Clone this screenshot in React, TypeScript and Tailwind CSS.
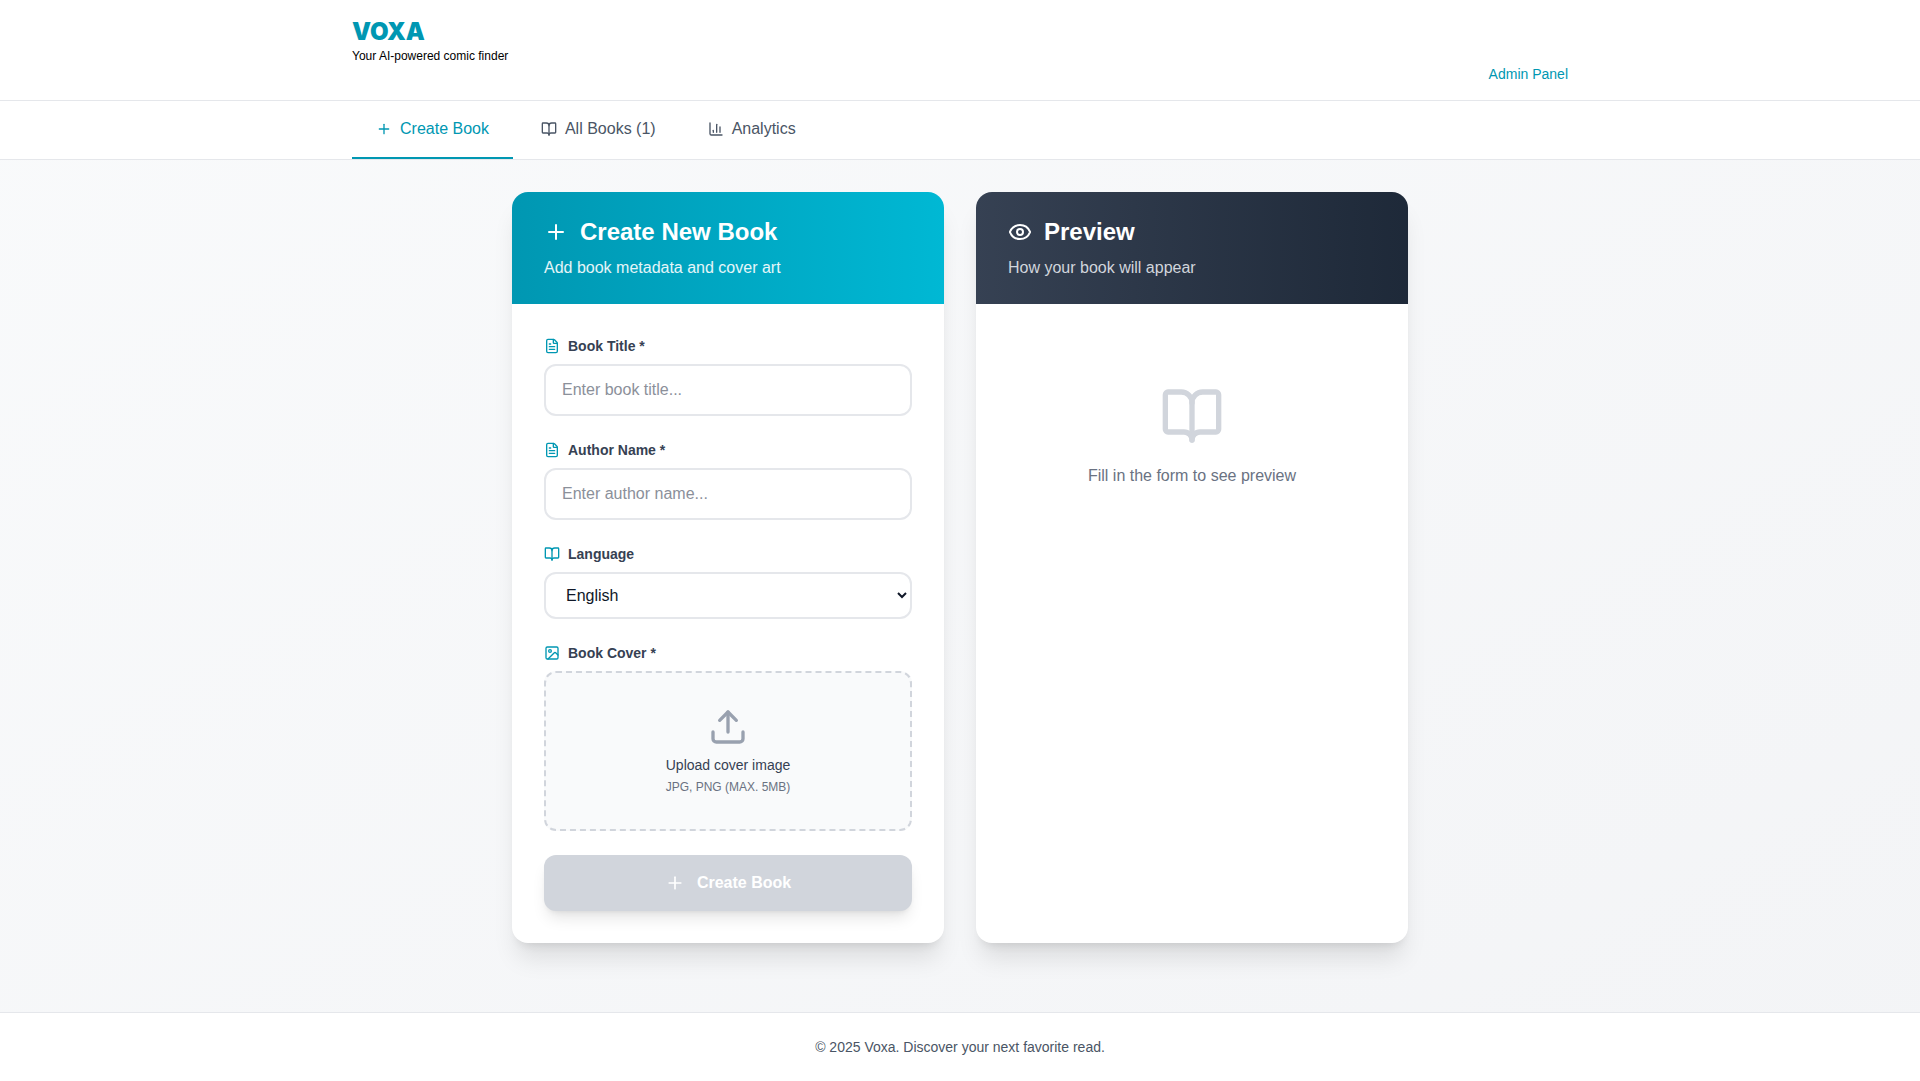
import React, { useState } from "react";
import {
  BookOpen,
  ChartColumn,
  Eye,
  FileText,
  Image as ImageIcon,
  Plus,
  Upload,
  type LucideIcon,
} from "lucide-react";

const inputClass =
  "w-full px-4 py-3 bg-white border-2 border-gray-200 rounded-xl text-base text-gray-900 placeholder:text-[#8b909a] focus:outline-none focus:border-[#0097b2]";

const tabs: { id: string; label: string; icon: LucideIcon }[] = [
  { id: "create", label: "Create Book", icon: Plus },
  { id: "books", label: "All Books (1)", icon: BookOpen },
  { id: "analytics", label: "Analytics", icon: ChartColumn },
];

function FieldLabel({
  htmlFor,
  icon: Icon,
  children,
}: {
  htmlFor: string;
  icon: LucideIcon;
  children: React.ReactNode;
}) {
  return (
    <label
      htmlFor={htmlFor}
      className="flex items-center gap-2 mb-2 text-sm font-semibold text-gray-700"
    >
      <Icon className="h-4 w-4 text-[#0097b2]" />
      {children}
    </label>
  );
}

function CardHeader({
  icon: Icon,
  title,
  subtitle,
  className,
  subtitleClassName,
}: {
  icon: LucideIcon;
  title: string;
  subtitle: string;
  className: string;
  subtitleClassName: string;
}) {
  return (
    <div className={`px-8 py-6 ${className}`}>
      <h2 className="flex items-center gap-3 text-2xl font-bold text-white">
        <Icon className="h-6 w-6" />
        {title}
      </h2>
      <p className={`mt-2 ${subtitleClassName}`}>{subtitle}</p>
    </div>
  );
}

export default function App() {
  const [activeTab, setActiveTab] = useState("create");
  const [title, setTitle] = useState("");
  const [author, setAuthor] = useState("");
  const [language, setLanguage] = useState("English");

  return (
    <div className="min-h-screen flex flex-col bg-gradient-to-br from-gray-50 to-gray-100 font-['Liberation_Sans',Arial,sans-serif] text-gray-900">
      {/* Header */}
      <header className="bg-white border-b border-gray-200">
        <div className="max-w-7xl mx-auto px-8 py-4">
          <h1 className="text-2xl font-black font-['Inter',sans-serif] [font-optical-sizing:none] text-[#0097b2]">
            VOXA
          </h1>
          <p className="text-xs text-black">Your AI-powered comic finder</p>
          <div className="flex justify-end">
            <a href="#admin" className="text-sm text-[#0097b2]">
              Admin Panel
            </a>
          </div>
        </div>
      </header>

      {/* Tabs */}
      <nav className="bg-white border-b border-gray-200">
        <div className="max-w-7xl mx-auto px-8 flex gap-1">
          {tabs.map(({ id, label, icon: Icon }) => (
            <button
              key={id}
              type="button"
              onClick={() => setActiveTab(id)}
              className={`flex items-center gap-2 px-6 py-4 border-b-2 ${
                activeTab === id
                  ? "border-[#0097b2] text-[#0097b2]"
                  : "border-transparent text-gray-600"
              }`}
            >
              <Icon className="h-4 w-4" />
              {label}
            </button>
          ))}
        </div>
      </nav>

      <main className="flex-1 w-full max-w-4xl mx-auto pt-8 pb-16">
        <div className="grid grid-cols-1 md:grid-cols-2 gap-8">
          {/* Create form */}
          <section className="bg-white rounded-2xl shadow-xl overflow-hidden">
            <CardHeader
              icon={Plus}
              title="Create New Book"
              subtitle="Add book metadata and cover art"
              className="bg-gradient-to-r from-[#0097b2] to-[#00b8d4]"
              subtitleClassName="text-white/90"
            />

            <form className="p-8 space-y-6" onSubmit={(e) => e.preventDefault()}>
              <div>
                <FieldLabel htmlFor="title" icon={FileText}>
                  Book Title *
                </FieldLabel>
                <input
                  id="title"
                  type="text"
                  value={title}
                  onChange={(e) => setTitle(e.target.value)}
                  placeholder="Enter book title..."
                  className={inputClass}
                />
              </div>

              <div>
                <FieldLabel htmlFor="author" icon={FileText}>
                  Author Name *
                </FieldLabel>
                <input
                  id="author"
                  type="text"
                  value={author}
                  onChange={(e) => setAuthor(e.target.value)}
                  placeholder="Enter author name..."
                  className={inputClass}
                />
              </div>

              <div>
                <FieldLabel htmlFor="language" icon={BookOpen}>
                  Language
                </FieldLabel>
                <select
                  id="language"
                  value={language}
                  onChange={(e) => setLanguage(e.target.value)}
                  className={inputClass}
                >
                  <option>English</option>
                  <option>Spanish</option>
                  <option>French</option>
                  <option>Japanese</option>
                </select>
              </div>

              <div>
                <FieldLabel htmlFor="cover" icon={ImageIcon}>
                  Book Cover *
                </FieldLabel>
                <label
                  htmlFor="cover"
                  className="flex flex-col items-center justify-center h-40 bg-gray-50 border-2 border-dashed border-gray-300 rounded-xl cursor-pointer"
                >
                  <Upload className="h-10 w-10 mb-2 text-gray-400" />
                  <span className="text-sm text-gray-700">
                    Upload cover image
                  </span>
                  <span className="mt-1 text-xs text-gray-500">
                    JPG, PNG (MAX. 5MB)
                  </span>
                  <input
                    id="cover"
                    type="file"
                    accept="image/*"
                    className="hidden"
                  />
                </label>
              </div>

              <button
                type="submit"
                disabled={!title || !author}
                className="w-full flex items-center justify-center gap-3 py-4 rounded-xl shadow-lg font-bold text-white bg-[#0097b2] disabled:bg-gray-300 disabled:cursor-not-allowed"
              >
                <Plus className="h-5 w-5" />
                Create Book
              </button>
            </form>
          </section>

          {/* Preview */}
          <section className="bg-white rounded-2xl shadow-xl overflow-hidden">
            <CardHeader
              icon={Eye}
              title="Preview"
              subtitle="How your book will appear"
              className="bg-gradient-to-r from-gray-700 to-gray-800"
              subtitleClassName="text-gray-300"
            />
            <div className="p-8">
              <div className="py-12 flex flex-col items-center text-center">
                <BookOpen className="h-16 w-16 mb-4 text-gray-300" />
                <p className="text-gray-500">Fill in the form to see preview</p>
              </div>
            </div>
          </section>
        </div>
      </main>

      <footer className="bg-white border-t border-gray-200 py-6 text-center text-sm text-gray-600">
        © 2025 Voxa. Discover your next favorite read.
      </footer>
    </div>
  );
}
